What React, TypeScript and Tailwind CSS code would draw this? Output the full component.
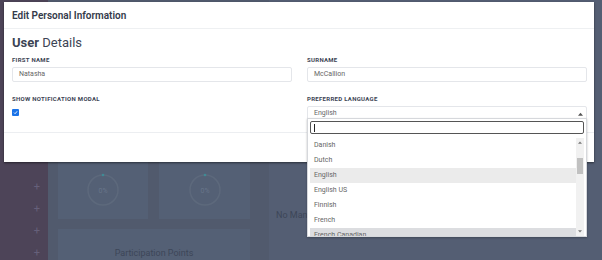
import { ChevronUp } from "lucide-react";

const languages = [
  { name: 'Danish' },
  { name: 'Dutch' },
  { name: 'English', selected: true },
  { name: 'English US' },
  { name: 'Finnish' },
  { name: 'French' },
  { name: 'French Canadian', hover: true },
];

function ScoreRing() {
  return (
    <svg width="34" height="34" viewBox="0 0 34 34">
      <circle cx="17" cy="17" r="15" fill="none" stroke="#5d697c" strokeWidth="1.5" />
      <circle cx="17" cy="2" r="1.3" fill="#3f8a95" />
      <text x="17" y="19.5" textAnchor="middle" fontSize="7" fill="#68758a" fontFamily="Roboto, sans-serif">0%</text>
    </svg>
  );
}

export default function App() {
  return (
    <div className="relative w-[602px] h-[260px] overflow-hidden font-['Roboto','Liberation_Sans',sans-serif]">
      {/* dimmed dashboard behind the modal */}
      <div className="flex h-full">
        <div className="w-[48px] bg-[#4d4458] flex flex-col items-end pr-[8px] pt-[180px] gap-[9px] text-[#66607a] text-[11px] leading-[13px]">
          <span>+</span>
          <span>+</span>
          <span>+</span>
          <span>+</span>
        </div>
        <div className="flex-1 bg-[#515a6d] flex pl-[10px] gap-[19px]">
          <div className="flex flex-col w-[192px] pt-[120px] gap-[10px]">
            <div className="flex gap-[11px] h-[99px]">
              <div className="w-[90px] bg-[#546075] flex flex-col items-center pt-[53px]">
                <ScoreRing />
              </div>
              <div className="w-[91px] bg-[#546075] flex flex-col items-center pt-[53px]">
                <ScoreRing />
              </div>
            </div>
            <div className="flex-1 bg-[#546075] flex justify-center pt-[18px] text-[9px] text-[#3d4658]">
              Participation Points
            </div>
          </div>
          <div className="flex-1 bg-[#545e73] pt-[209px] pl-[7px] text-[9px] text-[#3d4658]">
            No Managers
          </div>
        </div>
      </div>

      {/* modal */}
      <div className="absolute left-[4px] top-[2px] w-[590px] h-[160px] bg-white shadow-[0_1px_2px_rgba(0,0,0,0.5)] flex flex-col">
        <div className="h-[27px] border-b border-[#eef0f2] px-[8px] flex items-center text-[10px] font-semibold text-[#343a4a]">
          Edit Personal Information
        </div>
        <div className="px-[8px] h-[103px]">
          <h2 className="text-[13px] leading-[16px] text-[#3c4454] mt-[6px]">
            <span className="font-bold">User</span> Details
          </h2>
          <div className="grid grid-cols-[280px_280px] gap-x-[15px] mt-[5px]">
            <div>
              <p className="text-[6px] font-bold tracking-[0.3px] text-[#3c4454] leading-[8px]">FIRST NAME</p>
              <div className="mt-[3px] h-[15px] border border-[#e4e6ea] rounded-[2px] flex items-center px-[6px] text-[7px] text-[#666]">
                Natasha
              </div>
            </div>
            <div>
              <p className="text-[6px] font-bold tracking-[0.3px] text-[#3c4454] leading-[8px]">SURNAME</p>
              <div className="mt-[3px] h-[15px] border border-[#e4e6ea] rounded-[2px] flex items-center px-[6px] text-[7px] text-[#666]">
                McCallion
              </div>
            </div>
            <div className="mt-[13px]">
              <p className="text-[6px] font-bold tracking-[0.3px] text-[#3c4454] leading-[8px]">SHOW NOTIFICATION MODAL</p>
              <div className="mt-[6px] w-[7px] h-[7px] rounded-[1px] bg-[#1a73e8] flex items-center justify-center">
                <svg width="5" height="5" viewBox="0 0 10 10">
                  <path d="M2 5.2 L4.2 7.4 L8.2 2.6" fill="none" stroke="white" strokeWidth="1.8" />
                </svg>
              </div>
            </div>
            <div className="mt-[13px]">
              <p className="text-[6px] font-bold tracking-[0.3px] text-[#3c4454] leading-[8px]">PREFERRED LANGUAGE</p>
              <div className="mt-[3px] h-[15px] border border-[#e4e6ea] rounded-[2px] flex items-center justify-between pl-[6px] pr-[3px] text-[7px] text-[#666]">
                English
                <svg width="5" height="4" viewBox="0 0 6 4"><path d="M0 4 L3 0.5 L6 4 Z" fill="#555" /></svg>
              </div>
            </div>
          </div>
        </div>
        <div className="border-t border-[#eceef1] flex-1" />
      </div>

      {/* language dropdown */}
      <div className="absolute left-[307px] top-[118px] w-[280px] h-[119px] bg-white border border-[#d6d8dc] shadow-[0_1px_2px_rgba(0,0,0,0.25)] px-[2px] pt-[2px]">
        <div className="h-[13px] border border-[#555] rounded-[2px] flex items-center pl-[3px]">
          <div className="w-px h-[8px] bg-[#222]" />
        </div>
        <div className="flex mt-[4px] h-[98px]">
          <div className="flex-1 overflow-hidden">
            {languages.map(({ name, selected, hover }) => (
              <div
                key={name}
                className={`h-[15px] flex items-center pl-[4px] text-[7px] text-[#666] ${selected ? 'bg-[#ebebeb]' : ''} ${hover ? 'bg-[#dcdde0]' : ''}`}
              >
                {name}
              </div>
            ))}
          </div>
          <div className="w-[8px] bg-[#f1f1f1] flex flex-col items-center">
            <svg width="4" height="3" viewBox="0 0 6 4" className="mt-[3px]"><path d="M0 4 L3 0.5 L6 4 Z" fill="#777" /></svg>
            <div className="w-[6px] h-[16px] bg-[#c1c1c1] mt-[14px]" />
            <div className="flex-1" />
            <svg width="4" height="3" viewBox="0 0 6 4" className="mb-[3px]"><path d="M0 0 L6 0 L3 3.5 Z" fill="#777" /></svg>
          </div>
        </div>
      </div>
    </div>
  );
}
